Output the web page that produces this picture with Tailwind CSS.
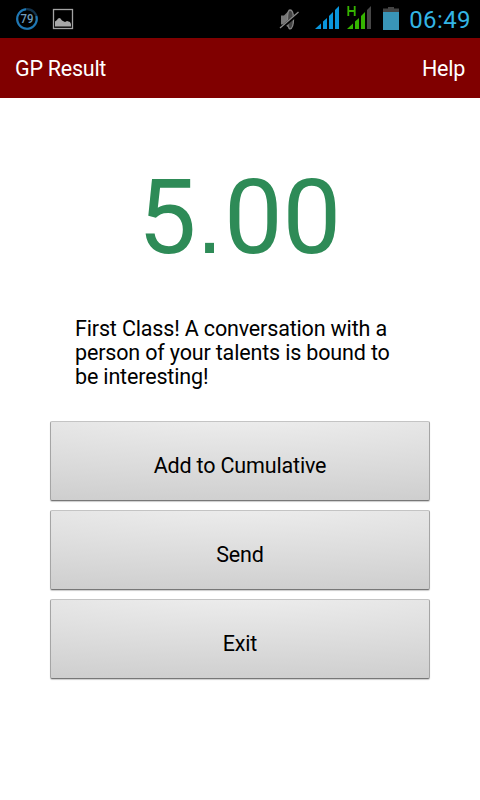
<!DOCTYPE html>
<html lang="en">
<head>
<meta charset="utf-8">
<title>GP Result</title>
<script src="https://cdn.jsdelivr.net/npm/@tailwindcss/browser@4"></script>
</head>
<body class="w-[480px] h-[800px] overflow-hidden bg-white font-['Roboto',sans-serif] text-black flex flex-col">
  <div class="h-[38px] shrink-0 bg-black flex">
    <svg class="w-[400px] h-[38px] shrink-0" viewBox="0 0 400 38">
      <circle cx="27" cy="19" r="9.8" fill="none" stroke="#12334d" stroke-width="2.2"/>
      <path d="M36.3 16A9.8 9.8 0 1 1 26 9.2" fill="none" stroke="#1f78b4" stroke-width="2"/>
      <text x="27" y="23.300" text-anchor="middle" font-size="12.5" font-weight="500" textLength="13" lengthAdjust="spacingAndGlyphs" fill="#6f9dbd">79</text>
      <rect x="53.5" y="9.5" width="19" height="19" fill="none" stroke="#a3a3a3" stroke-width="1.300"/>
      <path d="M55 26.500V21.500L57 20L58 18.500L60 18L62 20.500L65 22L67 21L70 22L71 24V26.500Z" fill="#a8a8a8"/>
      <path d="M281 15.500H284L288 11.500V27L284 24.500H281Z" fill="#777"/>
      <path d="M290 10Q293.500 10 293.500 19T290 29Q287.500 28 287.500 19T290 10Z" fill="#444" stroke="#858585" stroke-width="1.300"/>
      <path d="M280 29L299 13" stroke="#000" stroke-width="3"/>
      <path d="M280 28L298.500 12" stroke="#8a8a8a" stroke-width="1.300"/>
      <g fill="#0a96dc"><path d="M315 29L321 23.500V29Z"/><path d="M323 29V21.500L327 18V29Z"/><path d="M329 29V16L333 12V29Z"/><path d="M335 29V10L339 6V29Z"/></g>
      <g fill="#35b400"><path d="M347 29L353 23.500V29Z"/><path d="M355 29V21.500L359 18V29Z"/><path d="M361 29V16L365 12V29Z"/></g>
      <path d="M367 29V10L371 6V29Z" fill="#474747"/>
      <path d="M348.300 6V16M354.700 6V16M348 11H355" stroke="#35b400" stroke-width="1.800" fill="none"/>
      <path d="M388 7H394V8.500H399V12H383V8.500H388Z" fill="#444"/>
      <rect x="383" y="12" width="16" height="18" fill="#3995b8"/>
    </svg>
    <div class="flex-1 pr-[9px] text-right text-[24px] leading-[40px] tracking-[0.4px] text-[#33b5e5] whitespace-nowrap">06:49</div>
  </div>
  <header class="h-[60px] shrink-0 bg-[#800000] text-white text-[21.5px] tracking-[-0.25px] px-[15px] pt-[2px] flex items-center justify-between">
    <span>GP Result</span><span>Help</span>
  </header>
  <main class="flex flex-col">
    <div class="mt-[58px] h-[123px] leading-[123px] pr-px text-center text-[104.5px] text-[#2e8b57]">5<span class="font-['Liberation_Sans',sans-serif] text-[94px] leading-none mr-[1.4px]">.</span>00</div>
    <p class="mt-[38px] ml-[75px] text-[21.5px] leading-[24px] tracking-[-0.16px] whitespace-nowrap">First Class! A conversation with a<br>person of your talents is bound to<br>be interesting!</p>
    <div class="mt-[32px] mx-[50px] flex flex-col gap-[9px] text-[21.5px] tracking-[-0.16px]">
      <button class="h-[80px] pt-[10px] rounded-[2px] border border-t-[#c4c4c4] border-x-[#a5a5a5] border-b-[#777] bg-[radial-gradient(ellipse_180%_130%_at_50%_-20%,#f1f1f1,#cdcdcd)] shadow-[0_1px_1px_#0003]">Add to Cumulative</button>
      <button class="h-[80px] pt-[10px] rounded-[2px] border border-t-[#c4c4c4] border-x-[#a5a5a5] border-b-[#777] bg-[radial-gradient(ellipse_180%_130%_at_50%_-20%,#f1f1f1,#cdcdcd)] shadow-[0_1px_1px_#0003]">Send</button>
      <button class="h-[80px] pt-[10px] rounded-[2px] border border-t-[#c4c4c4] border-x-[#a5a5a5] border-b-[#777] bg-[radial-gradient(ellipse_180%_130%_at_50%_-20%,#f1f1f1,#cdcdcd)] shadow-[0_1px_1px_#0003]">Exit</button>
    </div>
  </main>
</body>
</html>
